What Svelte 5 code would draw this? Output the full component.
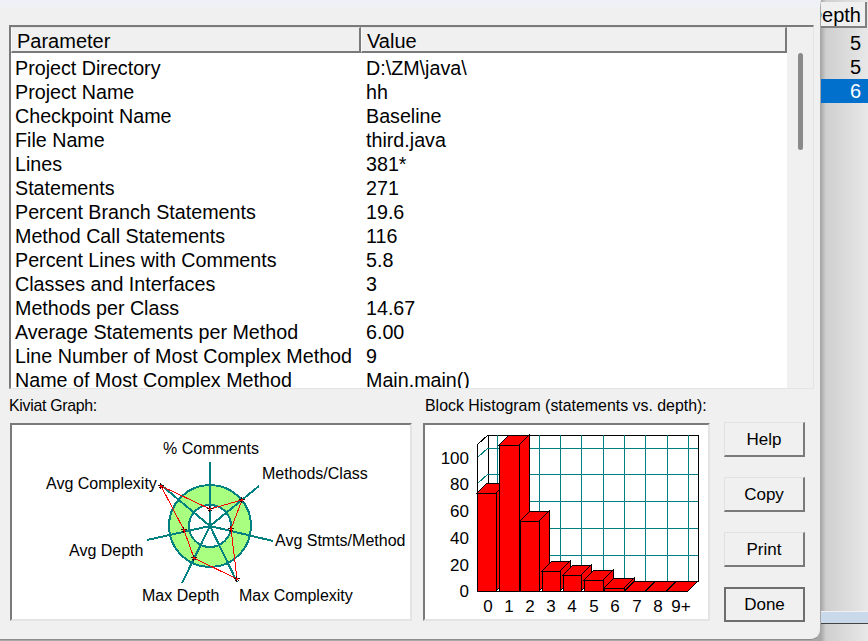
<script>
  const rows = [
    ['Project Directory', 'D:\\ZM\\java\\'],
    ['Project Name', 'hh'],
    ['Checkpoint Name', 'Baseline'],
    ['File Name', 'third.java'],
    ['Lines', '381*'],
    ['Statements', '271'],
    ['Percent Branch Statements', '19.6'],
    ['Method Call Statements', '116'],
    ['Percent Lines with Comments', '5.8'],
    ['Classes and Interfaces', '3'],
    ['Methods per Class', '14.67'],
    ['Average Statements per Method', '6.00'],
    ['Line Number of Most Complex Method', '9'],
    ['Name of Most Complex Method', 'Main.main()']
  ];

  // Kiviat: screen coordinates minus the inner corner of the frame (12,425)
  const kx = -12, ky = -425;
  const cx = 210 + kx, cy = 526 + ky;
  const spokes = [[210, 462], [259, 486], [273, 541], [237, 582], [182, 583], [147, 540], [161, 485]]
    .map((p) => [p[0] + kx, p[1] + ky]);
  const poly = [[210, 509], [242, 500], [231, 529], [237, 579], [194, 558], [184, 530], [161, 486]]
    .map((p) => [p[0] + kx, p[1] + ky]);
  const kLabels = [
    ['% Comments', 151, 29],
    ['Methods/Class', 250, 54],
    ['Avg Stmts/Method', 263, 121],
    ['Max Complexity', 227, 176],
    ['Max Depth', 130, 176],
    ['Avg Depth', 57, 131],
    ['Avg Complexity', 34, 64]
  ];

  // Histogram: screen coordinates minus the inner corner of the frame (425,425)
  const ox = -425, oy = -425;
  const vLines = [497, 518, 539, 560, 581, 603, 624, 645, 667, 688];
  const hLines = [448, 474, 501, 528, 555];
  const bars = [
    [477, 496, 493], [499, 519, 445], [520, 539, 521], [542, 560, 571], [563, 581, 575],
    [584, 603, 580], [604, 624, 588], [625, 645, 591], [646, 666, 591], [667, 688, 591]
  ];
  const yTicks = [[100, 458], [80, 484], [60, 511], [40, 538], [20, 565], [0, 591]];
  const xTicks = [['0', 488], ['1', 509], ['2', 530], ['3', 551], ['4', 572], ['5', 594], ['6', 615], ['7', 637], ['8', 658], ['9+', 681]];
  const D = 10;
  const barTop = (b) => {
    const [l, r, t] = b;
    return `${l + ox},${t + oy} ${l + D + ox},${t - D + oy} ${r + D + ox},${t - D + oy} ${r + ox},${t + oy}`;
  };
  const barSide = (b) => {
    const [, r, t] = b;
    return `${r + ox},${t + oy} ${r + D + ox},${t - D + oy} ${r + D + ox},${591 - D + oy} ${r + ox},${591 + oy}`;
  };
</script>

<div class="screen">
  <div class="dialog">
    <div class="table">
      <div class="list">
        <div class="head">
          <div class="hcell first">Parameter</div>
          <div class="hcell">Value</div>
        </div>
        <div class="body">
          {#each rows as r}
            <div class="row"><span class="c1">{r[0]}</span><span class="c2">{r[1]}</span></div>
          {/each}
        </div>
      </div>
      <div class="scroll"><div class="thumb"></div></div>
    </div>

    <div class="bottom">
      <section class="kiviat">
        <div class="caption">Kiviat Graph:</div>
        <div class="frame">
          <svg width="398" height="194" viewBox="0 0 398 194">
            <g shape-rendering="crispEdges">
              <circle cx={cx} cy={cy} r="41" fill="#a8ff80" stroke="#008080" stroke-width="2" />
              <circle cx={cx} cy={cy} r="21" fill="#fff" stroke="#008080" stroke-width="2" />
              {#each spokes as s}
                <line x1={cx} y1={cy} x2={s[0]} y2={s[1]} stroke="#008080" stroke-width="2" />
              {/each}
              <polygon points={poly.map((p) => p.join(',')).join(' ')} fill="none" stroke="#f00" stroke-width="1" />
              {#each poly as p}
                <path d="M{p[0] - 3} {p[1] - 0.5}h6M{p[0] - 0.5} {p[1] - 3}v6M{p[0] - 2} {p[1] + 2}l2 -2l2 2" stroke="#300" stroke-width="1" fill="none" />
                <rect x={p[0] - 1} y={p[1] - 1} width="2" height="2" fill="#f00" />
              {/each}
            </g>
            {#each kLabels as l}
              <text x={l[1]} y={l[2]} class="chart">{l[0]}</text>
            {/each}
          </svg>
        </div>
      </section>

      <section class="histo">
        <div class="caption">Block Histogram (statements vs. depth):</div>
        <div class="frame">
          <svg width="283" height="194" viewBox="0 0 283 194">
            <g shape-rendering="crispEdges">
              <polyline points="{488 + ox},{582 + oy} {488 + ox},{435 + oy} {698 + ox},{435 + oy} {698 + ox},{582 + oy}" fill="none" stroke="#000" />
              {#each vLines as x}
                <line x1={x + ox + 0.5} y1={435 + oy} x2={x + ox + 0.5} y2={582 + oy} stroke="#008080" />
              {/each}
              {#each hLines as y}
                <line x1={488 + ox} y1={y + oy + 0.5} x2={698 + ox} y2={y + oy + 0.5} stroke="#008080" />
              {/each}
              <line x1={477 + ox} y1={458 + oy} x2={488 + ox} y2={448 + oy} stroke="#008080" />
              <line x1={477 + ox} y1={484 + oy} x2={488 + ox} y2={474 + oy} stroke="#008080" />
              <polyline points="{477 + ox},{591 + oy} {477 + ox},{445 + oy} {488 + ox},{435 + oy}" fill="none" stroke="#000" />
              <line x1={688 + ox} y1={591 + oy} x2={698 + ox} y2={581 + oy} stroke="#000" />
              {#each bars as b}
                <polygon points={barSide(b)} fill="#f00" stroke="#000" />
                <polygon points={barTop(b)} fill="#f00" stroke="#000" />
                <rect x={b[0] + ox} y={b[2] + oy} width={b[1] - b[0]} height={591 - b[2]} fill="#f00" stroke="#000" />
              {/each}
              <line x1={477 + ox} y1={591.5 + oy} x2={688 + ox} y2={591.5 + oy} stroke="#000" />
            </g>
            {#each yTicks as t}
              <text x={469 + ox} y={t[1] + 6 + oy} class="chart tick" text-anchor="end">{t[0]}</text>
            {/each}
            {#each xTicks as t}
              <text x={t[1] + ox} y={612 + oy} class="chart tick" text-anchor="middle">{t[0]}</text>
            {/each}
          </svg>
        </div>
      </section>

      <div class="buttons">
        <button>Help</button>
        <button>Copy</button>
        <button>Print</button>
        <button class="default">Done</button>
      </div>
    </div>
  </div>

  <aside class="behind">
    <div class="depth"><span>Depth</span></div>
    <div class="drow">5</div>
    <div class="drow">5</div>
    <div class="drow sel">6</div>
    <div class="band"></div>
  </aside>
</div>

<style>
  :global(body) {
    margin: 0;
    background: #f0f0f0;
  }
  .screen {
    width: 868px;
    height: 641px;
    display: flex;
    overflow: hidden;
    font-family: "Liberation Sans", Arial, sans-serif;
    color: #000;
    background: linear-gradient(90deg, #a8a8a8 821px, #cfcfcf 826px, #e8e8e8 868px);
    position: relative;
  }
  .dialog {
    width: 821px;
    height: 640px;
    box-sizing: border-box;
    flex: none;
    background: #f0f0f0;
    border-bottom-right-radius: 10px;
    border-right: 1px solid #a6a6a6;
    border-bottom: 1px solid #8c8c8c;
    border-top: 7px solid #eef2f7;
    padding: 18px 7px 0 9px;
  }
  .table {
    width: 805px;
    height: 364px;
    box-sizing: border-box;
    display: flex;
    border-top: 2px solid #7a7a7a;
    border-left: 2px solid #7a7a7a;
    border-right: 1px solid #e4e4e4;
    border-bottom: 1px solid #e4e4e4;
    overflow: hidden;
  }
  .list {
    flex: 1;
    min-width: 0;
    background: #fff;
    overflow: hidden;
  }
  .head {
    display: flex;
    height: 26px;
    box-sizing: border-box;
    background: #f0f0f0;
  }
  .hcell {
    box-sizing: border-box;
    flex: 1;
    font-size: 20px;
    line-height: 27px;
    padding-left: 5px;
    border-top: 1px solid #e4e4e4;
    border-left: 1px solid #fafafa;
    border-right: 2px solid #7a7a7a;
    border-bottom: 2px solid #7a7a7a;
  }
  .hcell.first {
    flex: 0 0 350px;
  }
  .body {
    padding-top: 3px;
  }
  .row {
    height: 24px;
    line-height: 24px;
    font-size: 19.7px;
    display: flex;
    white-space: nowrap;
  }
  .c1 {
    flex: 0 0 355px;
    padding-left: 4px;
    box-sizing: border-box;
  }
  .c2 {
    flex: 1;
  }
  .scroll {
    flex: 0 0 26px;
    background: #f0f0f0;
    display: flex;
    justify-content: center;
  }
  .thumb {
    width: 5px;
    height: 97px;
    margin-top: 26px;
    background: #8a8a8a;
    border-radius: 3px;
  }
  .bottom {
    display: flex;
    margin-top: 7px;
  }
  .caption {
    font-size: 15.9px;
    height: 27px;
    line-height: 20px;
    white-space: nowrap;
  }
  .kiviat .caption {
    letter-spacing: -0.3px;
  }
  .frame {
    box-sizing: border-box;
    background: #fff;
    border-top: 2px solid #7a7a7a;
    border-left: 2px solid #7a7a7a;
    border-right: 2px solid #e4e4e4;
    border-bottom: 2px solid #e4e4e4;
    height: 198px;
  }
  .kiviat {
    width: 402px;
  }
  .kiviat .frame {
    width: 402px;
    margin-left: 1px;
  }
  .histo {
    width: 287px;
    margin-left: 12px;
  }
  .histo .caption {
    padding-left: 2px;
  }
  .histo .frame {
    width: 287px;
  }
  svg {
    display: block;
  }
  .chart {
    font-family: "Liberation Sans", Arial, sans-serif;
    font-size: 16px;
    fill: #000;
  }
  .tick {
    font-size: 17px;
  }
  .buttons {
    display: flex;
    flex-direction: column;
    gap: 20px;
    margin-left: 14px;
    margin-top: 26px;
  }
  button {
    width: 81px;
    height: 35px;
    box-sizing: border-box;
    background: #f0f0f0;
    font: 17px "Liberation Sans", Arial, sans-serif;
    color: #000;
    padding: 2px 0 0;
    border-style: solid;
    border-width: 1px 2px 2px 1px;
    border-color: #e2e2e2 #7a7a7a #7a7a7a #e2e2e2;
  }
  button.default {
    padding-top: 0;
    border: 2px solid #6e6e6e;
  }
  .behind {
    flex: 1;
    min-width: 0;
    display: flex;
    flex-direction: column;
    position: relative;
    overflow: hidden;
  }
  .depth {
    margin-top: 2px;
    margin-bottom: 3px;
    margin-right: 1px;
    height: 26px;
    box-sizing: border-box;
    background: #f0f0f0;
    border-bottom: 2px solid #808080;
    border-right: 2px solid #808080;
    font-size: 20px;
    line-height: 27px;
    overflow: hidden;
    display: flex;
    justify-content: flex-end;
    padding-right: 4px;
  }
  .drow {
    height: 24px;
    line-height: 24px;
    font-size: 20px;
    text-align: right;
    padding-right: 7px;
  }
  .drow.sel {
    background: #0070cc;
    color: #fff;
  }
  .band {
    position: absolute;
    left: 0;
    right: 0;
    top: 611px;
    height: 11px;
    background: #c9d9e9;
    border-top: 1px solid #eef2f6;
    border-bottom: 1px solid #444;
  }
</style>
